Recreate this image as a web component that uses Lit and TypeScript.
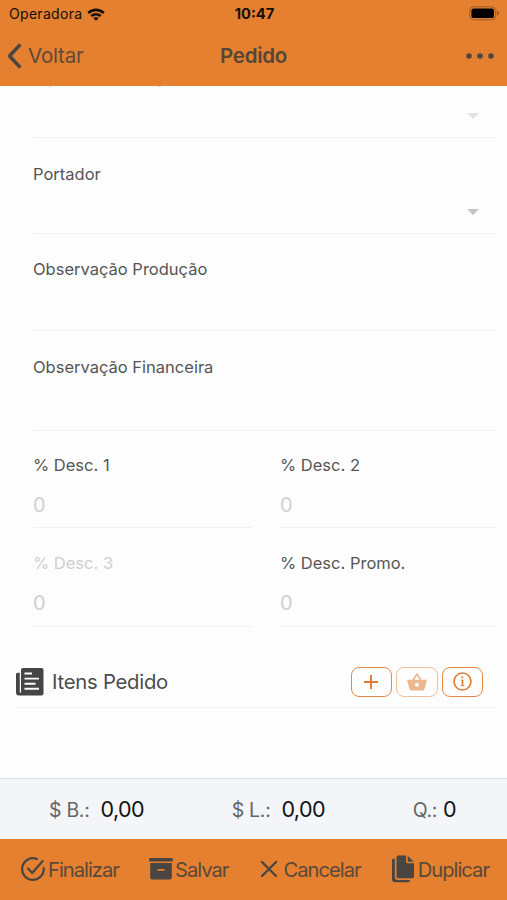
import { LitElement, html, css, svg, nothing } from "lit";
import { customElement, property } from "lit/decorators.js";

@customElement("order-field")
class OrderField extends LitElement {
  @property() label = "";
  @property() value = "";
  @property({ type: Boolean }) select = false;
  @property({ type: Boolean, reflect: true }) disabled = false;

  static styles = css`
    :host { display: flex; flex-direction: column; box-sizing: border-box; border-bottom: 1px solid #f1f1f1; padding-top: var(--top, 24px); }
    .label { font-size: 16.5px; line-height: 24px; color: #555; white-space: nowrap; letter-spacing: 0; }
    :host([disabled]) .label { color: #cfcfcf; }
    .control { flex: 1; display: flex; align-items: center; font-size: 20px; line-height: 24px; color: #d0d0d0; padding-top: 5px; }
    .arrow { margin: 0 17px 0 auto; width: 12px; height: 6px; fill: #c4c4c4; }
    :host([disabled]) .arrow { fill: #e2e2e2; }
  `;

  render() {
    return html`
      <div class="label">${this.label}</div>
      <div class="control">
        ${this.value}
        ${this.select ? html`<svg class="arrow" viewBox="0 0 12 6"><path d="M0 0h12L6 6z" /></svg>` : nothing}
      </div>
    `;
  }
}

const icons = {
  wifi: svg`<path d="M.3 5.100a12.500 12.500 0 0 1 17.400 0l-1.800 1.900a9.900 9.900 0 0 0-13.800 0zM3.400 8.200a8.200 8.200 0 0 1 11.200 0l-1.800 1.900a5.500 5.500 0 0 0-7.600 0zM6.400 11.200a3.900 3.900 0 0 1 5.200 0L9 13.800z"/>`,
};

@customElement("app-root")
class AppRoot extends LitElement {
  static styles = css`
    :host { display: flex; flex-direction: column; width: 507px; height: 900px; overflow: hidden; background: #fdfdfd; font-family: Inter, "Liberation Sans", sans-serif; color: #484746; }
    svg { display: block; flex: none; }
    .status { height: 28px; display: grid; grid-template-columns: 1fr auto 1fr; align-items: center; background: #e4802f; color: #15100b; font-size: 14px; padding: 0 7px 1px 9px; box-sizing: border-box; }
    .carrier { display: flex; align-items: center; gap: 5px; letter-spacing: 0.3px; }
    .clock { font-weight: 700; letter-spacing: 0; font-size: 14.7px; padding-top: 1px; }
    .battery { justify-self: end; }
    .nav { height: 58px; display: grid; grid-template-columns: 1fr auto 1fr; align-items: center; background: #e4802f; box-sizing: border-box; padding: 0 13px 3px; }
    .back { display: flex; align-items: center; gap: 6px; margin-left: -6px; font-size: 20.5px; color: #5e4a3a; letter-spacing: -0.2px; }
    .title { font-weight: 600; font-size: 20.5px; letter-spacing: -0.3px; color: #564636; }
    .more { justify-self: end; }
    .content { flex: 1; overflow: hidden; min-height: 0; }
    .form { display: grid; grid-template-columns: 219px 216px; column-gap: 28px; padding: 0 11px 0 33px; margin-top: -45px; grid-template-rows: 97px 96px 97px 100px 97px 99px; }
    .wide { grid-column: 1 / -1; }
    .lowered { --top: 25px; }
    .raised { --top: 23px; }
    .tight { --top: 22px; }
    .items { height: 81px; box-sizing: border-box; margin: 0 11px 0 15px; padding: 29px 13px 0 1px; border-bottom: 1px solid #f3f3f3; display: flex; align-items: center; }
    .heading { margin-left: 8px; font-size: 20.3px; line-height: 28px; letter-spacing: -0.25px; color: #4c4c4c; white-space: nowrap; }
    .actions { margin-left: auto; display: flex; gap: 4px; }
    .btn { width: 41.5px; height: 30px; box-sizing: border-box; border: 1.5px solid #e58a45; border-radius: 8px; display: flex; align-items: center; justify-content: center; color: #e07a2e; }
    .off { opacity: 0.52; }
    .totals { height: 61px; flex: none; box-sizing: border-box; border-top: 1px solid #dfe0e3; background: #f4f5f9; display: flex; padding: 0 51px 1px 49px; align-items: center; justify-content: space-between; }
    .total { display: flex; align-items: baseline; font-size: 19.5px; letter-spacing: -0.3px; color: #666; white-space: nowrap; }
    .amount { color: #121212; font-size: 21.5px; margin-left: 11px; letter-spacing: -0.6px; }
    .count { margin-left: 6px; }
    .bar { height: 61px; flex: none; background: #e4802f; display: flex; align-items: center; justify-content: space-between; padding: 0 18px 1px 21px; box-sizing: border-box; color: #484542; }
    .cmd { display: flex; align-items: center; font-size: 20.2px; color: #5b4939; letter-spacing: -1px; white-space: nowrap; gap: 3px; }
    .cmd svg { color: #484542; }
    .save { margin-left: -1px; gap: 2px; }
  `;

  render() {
    return html`
      <div class="status">
        <div class="carrier"><span>Operadora</span><svg width="18" height="14" viewBox="0 0 18 14" fill="currentColor">${icons.wifi}</svg></div>
        <div class="clock">10:47</div>
        <svg class="battery" width="31" height="15" viewBox="0 0 31 15"><rect x=".7" y=".8" width="26" height="13" rx="4" fill="none" stroke="#9d5a25" /><rect x="2.4" y="2.5" width="22.6" height="9.6" rx="2.2" fill="#000" /><path d="M28 5q2 .5 2 2.3T28 9.6z" fill="#9d5a25" /></svg>
      </div>
      <div class="nav">
        <div class="back"><svg width="15" height="26" viewBox="0 0 15 26" fill="none" stroke="#484746" stroke-width="3.4"><path d="M13.3 1.5 2.5 13l10.8 11.5" stroke-linejoin="round" /></svg><span>Voltar</span></div>
        <div class="title">Pedido</div>
        <svg class="more" width="28" height="6" viewBox="0 0 28 6" fill="#484746"><circle cx="3" cy="3" r="2.8" /><circle cx="14" cy="3" r="2.8" /><circle cx="25" cy="3" r="2.8" /></svg>
      </div>
      <div class="content">
        <div class="form">
          <order-field class="wide lowered" label="Tipo de Cobrança" select disabled></order-field>
          <order-field class="wide" label="Portador" select></order-field>
          <order-field class="wide raised" label="Observação Produção"></order-field>
          <order-field class="wide" label="Observação Financeira"></order-field>
          <order-field class="tight" label="% Desc. 1" value="0"></order-field>
          <order-field class="tight" label="% Desc. 2" value="0"></order-field>
          <order-field class="raised" label="% Desc. 3" value="0" disabled></order-field>
          <order-field class="raised" label="% Desc. Promo." value="0"></order-field>
        </div>
        <div class="items">
          <svg width="28" height="28" viewBox="0 0 28 28"><path d="M0 6.200Q0 4.700 1.500 4.700h2.300v19.500q0 .6.600.6t.6-.6V2q0-2 2-2h18.500q2 0 2 2v23.500q0 2-2 2H3q-3 0-3-3z" fill="#454545" /><path d="M8.500 5.500h7.500M8.500 10.600h14.500M8.500 15.700h11M8.500 20.800h14.500" stroke="#fdfdfd" stroke-width="1.900" /></svg>
          <div class="heading">Itens Pedido</div>
          <div class="actions">
            <div class="btn"><svg width="16" height="16" viewBox="0 0 16 16" stroke="currentColor" stroke-width="1.9"><path d="M8 1v14M1 8h14" /></svg></div>
            <div class="btn off"><svg width="20" height="18" viewBox="0 0 20 18"><path d="M5.500 8 10 1l4.500 7" fill="none" stroke="currentColor" stroke-width="1.600" stroke-linejoin="round" /><path fill-rule="evenodd" d="M1 6.800h18q1 0 .8 1l-2.300 8.200q-.4 1.500-2 1.500h-11q-1.600 0-2-1.500L.2 7.800q-.2-1 .8-1zM10 9.800a2 2 0 1 0 0 4 2 2 0 0 0 0-4z" fill="currentColor" /></svg></div>
            <div class="btn"><svg width="19" height="19" viewBox="0 0 19 19" fill="none" stroke="currentColor"><circle cx="9.500" cy="9.500" r="8.500" stroke-width="1.600" /><path d="M9.500 7.800v6" stroke-width="1.600" /><path d="M8 8.200h1.500M7.800 13.700h3.400" stroke-width="1" /><circle cx="9.400" cy="5.300" r="1" fill="currentColor" stroke="none" /></svg></div>
          </div>
        </div>
      </div>
      <div class="totals">
        <div class="total">$ B.:<span class="amount">0,00</span></div>
        <div class="total">$ L.:<span class="amount">0,00</span></div>
        <div class="total">Q.:<span class="amount count">0</span></div>
      </div>
      <div class="bar">
        <div class="cmd"><svg width="24" height="24" viewBox="0 0 24 24" fill="none" stroke="currentColor" stroke-width="2.200" stroke-linecap="round" stroke-linejoin="round"><path d="M15.900 2A10.800 10.800 0 1 0 22.700 11" /><path d="m7 11.500 4.200 4.500L21.700 4" /></svg><span>Finalizar</span></div>
        <div class="cmd save"><svg width="24" height="22" viewBox="0 0 24 22"><path fill="currentColor" d="M1.500 0h21q1.300 0 1.300 1.300v2.200H.2V1.300Q.2 0 1.500 0z" /><path fill="currentColor" fill-rule="evenodd" d="M1.200 5h21.600v14.500q0 2-2 2H3.200q-2 0-2-2zM8.500 11v1.800h7V11z" /></svg><span>Salvar</span></div>
        <div class="cmd"><svg width="21" height="18" viewBox="0 0 21 18" fill="none" stroke="currentColor" stroke-width="2.300" stroke-linecap="round"><path d="m2 2 14 14M16 2 2 16" /></svg><span>Cancelar</span></div>
        <div class="cmd"><svg width="23" height="28" viewBox="0 0 23 28" fill="currentColor"><path d="M0 5q0-1.300 1.300-1.300h1.500V22q0 3 3 3H18v.600q0 1.700-1.700 1.700H3q-3 0-3-3zM6 .5h8v6.200q0 1.500 1.500 1.500H22v13.300q0 1.700-1.700 1.700H6.200q-1.700 0-1.700-1.700V2q0-1.500 1.500-1.500z" /><path d="M15.700.8 21.700 6.700h-5q-1 0-1-1z" /></svg><span>Duplicar</span></div>
      </div>
    `;
  }
}
